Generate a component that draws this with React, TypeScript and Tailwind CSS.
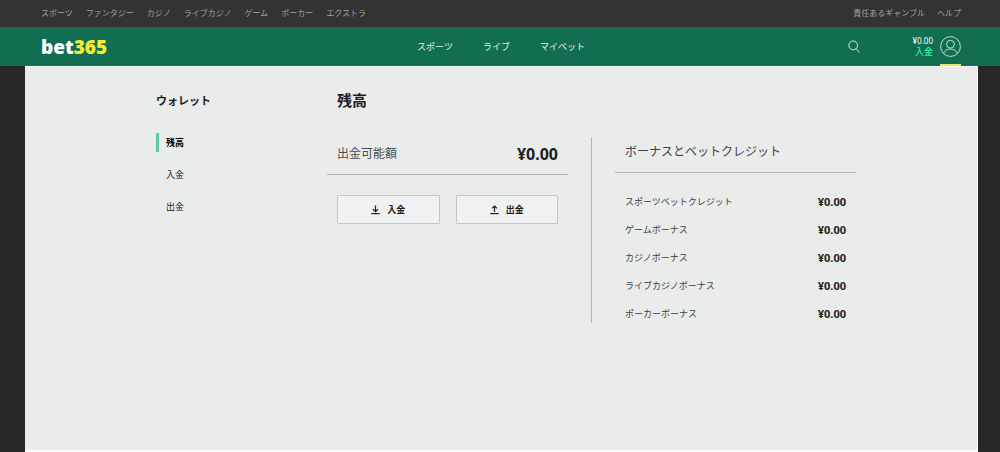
import { FC, ReactNode } from "react";

const products = ["スポーツ", "ファンタジー", "カジノ", "ライブカジノ", "ゲーム", "ポーカー", "エクストラ"];
const helpLinks = ["責任あるギャンブル", "ヘルプ"];
const mainLinks = ["スポーツ", "ライブ", "マイベット"];
const walletLinks = ["残高", "入金", "出金"];

const bonuses = [
  { name: "スポーツベットクレジット", amount: "¥0.00" },
  { name: "ゲームボーナス", amount: "¥0.00" },
  { name: "カジノボーナス", amount: "¥0.00" },
  { name: "ライブカジノボーナス", amount: "¥0.00" },
  { name: "ポーカーボーナス", amount: "¥0.00" },
];

const TopBar: FC = () => (
  <div className="flex h-[27px] items-center justify-between bg-[#333333] pr-[39px] pb-[2px] pl-[41px] text-[8px] text-[#a3a3a3]">
    <nav className="flex gap-[13px]">
      {products.map((item) => (
        <a key={item} href="#">
          {item}
        </a>
      ))}
    </nav>
    <nav className="flex gap-3">
      {helpLinks.map((item) => (
        <a key={item} href="#">
          {item}
        </a>
      ))}
    </nav>
  </div>
);

const Header: FC = () => (
  <header className="grid h-[39px] grid-cols-[1fr_auto_1fr] items-stretch bg-[#126e51] pr-[39px] pl-[41px] text-white">
    <a href="#" className="self-center text-[19px] leading-5 font-black">
      bet<span className="text-[#f5ee30]">365</span>
    </a>
    <nav className="flex items-center gap-[30px] text-[9px] text-[#e3f0ec]">
      {mainLinks.map((item) => (
        <a key={item} href="#">
          {item}
        </a>
      ))}
    </nav>
    <div className="flex items-stretch justify-end">
      <button type="button" aria-label="検索" className="mr-[53px]">
        <svg width="12" height="13" viewBox="0 0 12 13" fill="none" stroke="#d5e8e1">
          <circle cx="5.2" cy="5.4" r="4.4" />
          <path d="M8.2 8.8 11 12.2" strokeLinecap="round" />
        </svg>
      </button>
      <a href="#" className="mr-[7px] flex flex-col justify-center text-right">
        <span className="text-[8px] leading-[10px]">¥0.00</span>
        <span className="text-[9px] leading-3 font-medium text-[#2af3a6]">入金</span>
      </a>
      <button
        type="button"
        aria-label="アカウント"
        className="flex items-center border-b-2 border-[#e3ea63] pt-[2px]"
      >
        <svg width="21" height="21" viewBox="0 0 21 21" fill="none" stroke="#c5dfd5">
          <circle cx="10.5" cy="10.5" r="9.9" />
          <circle cx="10.5" cy="8.2" r="3.9" />
          <path d="M3.6 17.4C4.7 14.6 7.4 13 10.5 13s5.8 1.6 6.9 4.4" />
        </svg>
      </button>
    </div>
  </header>
);

const Sidebar: FC = () => (
  <aside className="w-[181px] shrink-0 pl-[10px]">
    <h2 className="text-[11px] leading-[22px] font-bold">ウォレット</h2>
    <ul className="mt-[21px] flex flex-col gap-[13px] text-[9px]">
      {walletLinks.map((item, i) => (
        <li key={item}>
          <a
            href="#"
            className={
              i === 0
                ? "block border-l-[3px] border-[#5ccba4] pl-[7px] leading-[19px] font-bold text-black"
                : "block border-l-[3px] border-transparent pl-[7px] leading-[19px]"
            }
          >
            {item}
          </a>
        </li>
      ))}
    </ul>
  </aside>
);

const ActionButton: FC<{ children: ReactNode; up?: boolean }> = ({ children, up }) => (
  <button
    type="button"
    className="flex h-[29px] flex-1 items-center justify-center gap-[7px] rounded-[1px] border border-[#c4c6c8] bg-[#f0f1f3] text-[9px] font-bold"
  >
    <svg width="9" height="10" viewBox="0 0 9 10" fill="none" stroke="currentColor" strokeWidth="1.2">
      {up ? <path d="M4.5 7V1M2 3.4 4.5 1 7 3.4" /> : <path d="M4.5 .5v6M2 4.2l2.5 2.4L7 4.2" />}
      <path d="M.3 8.6h8.4" />
    </svg>
    {children}
  </button>
);

const Withdrawable: FC = () => (
  <section className="min-w-0 flex-1">
    <div className="flex h-[38px] items-center justify-between border-b border-[#b4b6b6] px-[10px] pb-1">
      <h3 className="text-[12px] text-[#4a4c4c]">出金可能額</h3>
      <span className="text-[16px] font-bold">¥0.00</span>
    </div>
    <div className="mt-5 flex gap-4 px-[10px]">
      <ActionButton>入金</ActionButton>
      <ActionButton up>出金</ActionButton>
    </div>
  </section>
);

const Bonuses: FC = () => (
  <section className="min-w-0 flex-1">
    <h3 className="flex h-[36px] items-center border-b border-[#b4b6b6] px-[10px] pb-[6px] text-[12px] text-[#404242]">
      ボーナスとベットクレジット
    </h3>
    <table className="mt-[15px] w-full">
      <tbody>
        {bonuses.map(({ name, amount }) => (
          <tr key={name} className="h-[28px]">
            <th scope="row" className="pl-[10px] text-left text-[9px] font-normal text-[#3c3e3e]">
              {name}
            </th>
            <td className="pr-[10px] text-right text-[11px] font-bold">{amount}</td>
          </tr>
        ))}
      </tbody>
    </table>
  </section>
);

const App: FC = () => {
  return (
    <div
      lang="ja"
      className="flex min-h-screen flex-col bg-[#282828] font-['Noto_Sans','Noto_Sans_CJK_JP',sans-serif] text-[#1e2020]"
    >
      <TopBar />
      <Header />
      <div className="mr-[22px] ml-[25px] flex-1 border-t border-r border-b-2 border-[#f8f9f9] bg-[#eaeceb]">
        <div className="mx-auto flex max-w-[710px] pt-[23px]">
          <Sidebar />
          <main className="min-w-0 flex-1">
            <h1 className="pl-[10px] text-[15px] leading-5 font-bold">残高</h1>
            <div className="mt-[27px] flex">
              <Withdrawable />
              <div className="mx-[23px] mb-[5px] w-px bg-[#b4b6b6]" />
              <Bonuses />
            </div>
          </main>
        </div>
      </div>
    </div>
  );
};

export default App;
